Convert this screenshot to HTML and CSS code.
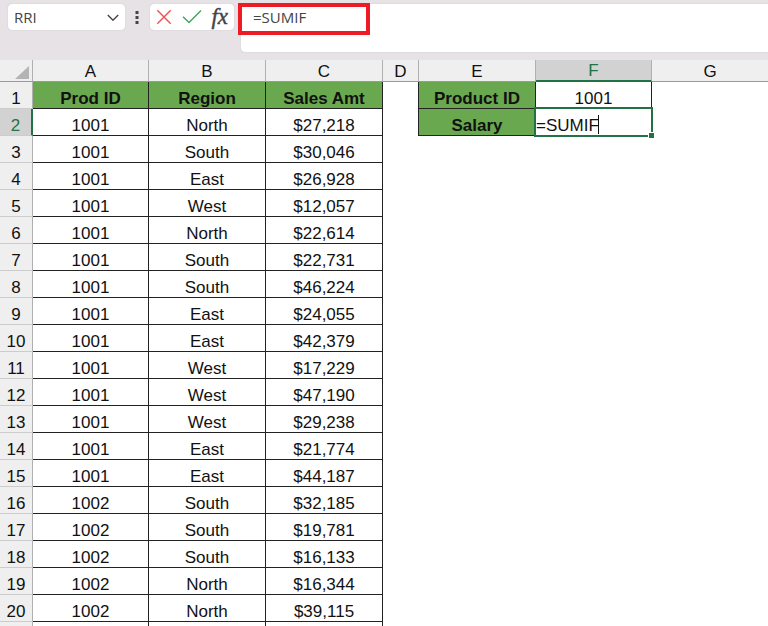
FILE: index.html
```html
<!DOCTYPE html>
<html lang="en">
<head>
<meta charset="utf-8">
<title>Spreadsheet</title>
<link rel="stylesheet" href="styles.css">
</head>
<body>
<header class="bar">
  <div class="namebox">
    <input class="name-input" type="text" value="RRI" aria-label="Name box">
    <button class="icon-btn chevron" type="button" aria-label="Open name list">
      <svg width="12" height="8" viewBox="0 0 12 8"><path d="M.8 2 6 7.2 11.2 2" fill="none" stroke="#444" stroke-width="1.4"/></svg>
    </button>
  </div>
  <svg class="dots" width="4" height="14" viewBox="0 0 4 14" fill="#444"><path d="M.5 1h3v3h-3zM.5 6h3v3h-3zM.5 11h3v3h-3z"/></svg>
  <div class="actions">
    <button class="icon-btn" type="button" aria-label="Cancel">
      <svg width="16" height="16" viewBox="0 0 16 16"><path d="M1.3 1.3 14.7 14.7M14.7 1.3 1.3 14.7" fill="none" stroke="#f0504d" stroke-width="1.4"/></svg>
    </button>
    <button class="icon-btn" type="button" aria-label="Enter">
      <svg width="20" height="16" viewBox="0 0 20 16"><path d="M1 7.7 7 13.5 19 1.5" fill="none" stroke="#43a560" stroke-width="1.5"/></svg>
    </button>
    <button class="icon-btn fx" type="button" aria-label="Insert function">fx</button>
  </div>
  <div class="formula">
    <textarea class="formula-input" aria-label="Formula bar" spellcheck="false">=SUMIF</textarea>
    <span class="callout"></span>
  </div>
</header>
<main class="sheet">
<table class="grid">
  <colgroup><col class="w-num"><col class="w-a"><col class="w-b"><col class="w-b"><col class="w-d"><col class="w-b"><col class="w-f"><col></colgroup>
  <thead>
    <tr><th class="corner"><svg width="14" height="14" viewBox="0 0 14 14"><path d="M14 0v13H0z" fill="#b4b4b4"/></svg></th><th>A</th><th>B</th><th>C</th><th>D</th><th>E</th><th class="active-col">F</th><th>G</th></tr>
  </thead>
  <tbody>
    <tr><th>1</th><td class="title">Prod ID</td><td class="title">Region</td><td class="title">Sales Amt</td><td class="before"></td><td class="title">Product ID</td><td class="cell">1001</td><td></td></tr>
    <tr><th class="active-row">2</th><td class="cell">1001</td><td class="cell">North</td><td class="cell">$27,218</td><td class="before"></td><td class="title">Salary</td><td class="editing"><input class="edit-input" type="text" value="=SUMIF" aria-label="Cell F2" spellcheck="false"><span class="caret"></span><span class="outline"></span><span class="handle"></span></td><td></td></tr>
    <tr><th>3</th><td class="cell">1001</td><td class="cell">South</td><td class="cell">$30,046</td><td colspan="4"></td></tr>
    <tr><th>4</th><td class="cell">1001</td><td class="cell">East</td><td class="cell">$26,928</td><td colspan="4"></td></tr>
    <tr><th>5</th><td class="cell">1001</td><td class="cell">West</td><td class="cell">$12,057</td><td colspan="4"></td></tr>
    <tr><th>6</th><td class="cell">1001</td><td class="cell">North</td><td class="cell">$22,614</td><td colspan="4"></td></tr>
    <tr><th>7</th><td class="cell">1001</td><td class="cell">South</td><td class="cell">$22,731</td><td colspan="4"></td></tr>
    <tr><th>8</th><td class="cell">1001</td><td class="cell">South</td><td class="cell">$46,224</td><td colspan="4"></td></tr>
    <tr><th>9</th><td class="cell">1001</td><td class="cell">East</td><td class="cell">$24,055</td><td colspan="4"></td></tr>
    <tr><th>10</th><td class="cell">1001</td><td class="cell">East</td><td class="cell">$42,379</td><td colspan="4"></td></tr>
    <tr><th>11</th><td class="cell">1001</td><td class="cell">West</td><td class="cell">$17,229</td><td colspan="4"></td></tr>
    <tr><th>12</th><td class="cell">1001</td><td class="cell">West</td><td class="cell">$47,190</td><td colspan="4"></td></tr>
    <tr><th>13</th><td class="cell">1001</td><td class="cell">West</td><td class="cell">$29,238</td><td colspan="4"></td></tr>
    <tr><th>14</th><td class="cell">1001</td><td class="cell">East</td><td class="cell">$21,774</td><td colspan="4"></td></tr>
    <tr><th>15</th><td class="cell">1001</td><td class="cell">East</td><td class="cell">$44,187</td><td colspan="4"></td></tr>
    <tr><th>16</th><td class="cell">1002</td><td class="cell">South</td><td class="cell">$32,185</td><td colspan="4"></td></tr>
    <tr><th>17</th><td class="cell">1002</td><td class="cell">South</td><td class="cell">$19,781</td><td colspan="4"></td></tr>
    <tr><th>18</th><td class="cell">1002</td><td class="cell">South</td><td class="cell">$16,133</td><td colspan="4"></td></tr>
    <tr><th>19</th><td class="cell">1002</td><td class="cell">North</td><td class="cell">$16,344</td><td colspan="4"></td></tr>
    <tr><th>20</th><td class="cell">1002</td><td class="cell">North</td><td class="cell">$39,115</td><td colspan="4"></td></tr>
    <tr><th></th><td class="cell"></td><td class="cell"></td><td class="cell"></td><td colspan="4"></td></tr>
  </tbody>
</table>
</main>
</body>
</html>
```
FILE: styles.css
```css
* { box-sizing: border-box; }

body {
  margin: 0;
  height: 100vh;
  overflow: hidden;
  display: flex;
  flex-direction: column;
  background: #fff;
  color: #111;
  font-family: "Liberation Sans", Arial, sans-serif;
}

input, textarea, button {
  margin: 0;
  padding: 0;
  border: 0;
  background: none;
  color: inherit;
  font: inherit;
  outline: none;
}

/* Formula bar */
.bar {
  flex: none;
  display: flex;
  align-items: flex-start;
  padding: 4px 0 8px 8px;
  background: #e6e2e6;
  color: #444;
  font-family: "Open Sans", "Noto Sans", sans-serif;
  font-size: 15px;
}
.namebox, .actions, .formula {
  background: #fff;
  border-radius: 4px;
  box-shadow: 0 0 1px #aaa;
}
.namebox {
  display: flex;
  align-items: center;
  width: 117px;
  height: 26px;
  padding: 0 6px;
}
.name-input { flex: 1; min-width: 0; }
.icon-btn {
  display: flex;
  align-items: center;
  justify-content: center;
}
.dots { margin: 6px 11px 0 10px; }
.actions {
  display: flex;
  align-items: center;
  justify-content: space-between;
  width: 84px;
  height: 26px;
  padding: 0 6px;
}
.fx {
  font: italic 23px/24px "Liberation Serif", serif;
  -webkit-text-stroke: 0.4px #444;
}
.formula {
  position: relative;
  flex: 1;
  height: 48px;
  margin-left: 7px;
  border-radius: 4px 0 0 4px;
}
.formula-input {
  display: block;
  width: 100%;
  height: 100%;
  padding: 3px 12px;
  line-height: 20px;
  resize: none;
  overflow: hidden;
}
.callout {
  position: absolute;
  left: -3px;
  top: -1px;
  width: 132px;
  height: 32px;
  border: 4px solid #ed1c24;
  pointer-events: none;
}

/* Grid */
.sheet { flex: 1; min-height: 0; }
.grid {
  width: 100%;
  table-layout: fixed;
  border-collapse: separate;
  border-spacing: 0;
  font-size: 17px;
  line-height: 18px;
  text-align: center;
}
.w-num { width: 33px; }
.w-a, .w-f { width: 116px; }
.w-b { width: 117px; }
.w-d { width: 36px; }

.grid th {
  padding: 0;
  background: #efefef;
  font-weight: 400;
  border-right: 1px solid #b0b0b0;
}
.grid thead th {
  height: 22px;
  padding-top: 2px;
  border-bottom: 1px solid #999;
}
.grid thead th:last-child { border-right: 0; }
.grid thead .corner { text-align: right; padding: 5px 3px 0 0; line-height: 0; }
.grid thead .active-col {
  background: #d2d2d2;
  color: #217346;
  border-bottom: 2px solid #217346;
}
.grid tbody th, .grid td { height: 27px; padding: 8px 0 0; }
.grid tbody th { border-bottom: 1px solid #ccc; }
.grid .active-row {
  background: #d2d2d2;
  color: #217346;
  border-right: 2px solid #217346;
}
.cell, .title {
  border-right: 1px solid #222;
  border-bottom: 1px solid #222;
}
.title { background: #6aa84f; font-weight: 700; }
.before { border-right: 1px solid #222; }
.grid .editing { position: relative; padding-top: 7px; }
.edit-input { display: block; width: 100%; height: 18px; }
.caret {
  position: absolute;
  left: 62px;
  top: 6px;
  width: 1px;
  height: 19px;
  background: #111;
}
.outline {
  position: absolute;
  inset: -2px -1px -1px -2px;
  border: 2px solid #217346;
  pointer-events: none;
}
.handle {
  position: absolute;
  right: -2px;
  bottom: -2px;
  width: 6px;
  height: 6px;
  background: #217346;
  border: 1px solid #fff;
  border-width: 1px 0 0 1px;
}
```
